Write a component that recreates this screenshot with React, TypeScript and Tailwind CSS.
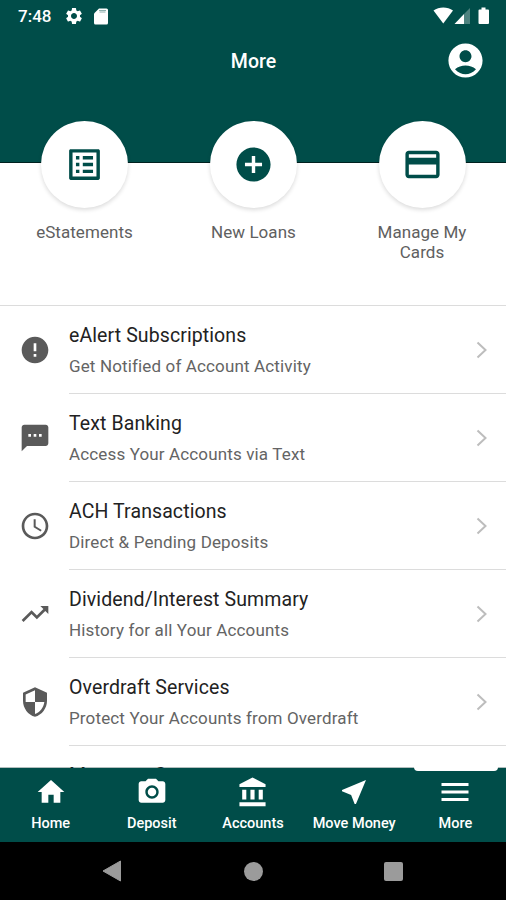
import React, { useState } from 'react'
import {
    MdAccessTime,
    MdAccountCircle,
    MdAddCircle,
    MdError,
    MdHome,
    MdListAlt,
    MdMenu,
    MdNearMe,
    MdPayment,
    MdPhotoCamera,
    MdSecurity,
    MdSettings,
    MdTextsms,
    MdTrendingUp,
} from 'react-icons/md'

const shortcuts = [
    { label: 'eStatements', icon: MdListAlt },
    { label: 'New Loans', icon: MdAddCircle },
    { label: 'Manage My Cards', icon: MdPayment },
]

const services = [
    { title: 'eAlert Subscriptions', text: 'Get Notified of Account Activity', icon: MdError },
    { title: 'Text Banking', text: 'Access Your Accounts via Text', icon: MdTextsms },
    { title: 'ACH Transactions', text: 'Direct & Pending Deposits', icon: MdAccessTime },
    { title: 'Dividend/Interest Summary', text: 'History for all Your Accounts', icon: MdTrendingUp },
    { title: 'Overdraft Services', text: 'Protect Your Accounts from Overdraft', icon: MdSecurity },
]

const tabs = [
    { label: 'Home', icon: MdHome, size: 'h-8 w-8' },
    { label: 'Deposit', icon: MdPhotoCamera, size: 'h-8 w-8' },
    { label: 'Accounts', icon: BankIcon, size: 'h-[33px] w-[33px]' },
    { label: 'Move Money', icon: MdNearMe, size: 'h-8 w-8' },
    { label: 'More', icon: MdMenu, size: 'h-9 w-9' },
]

function BankIcon({ className }: { className?: string }) {
    return (
        <svg viewBox="-0.5 0 24 24" className={className} fill="currentColor">
            <path d="M4 10v7h3v-7H4zm6 0v7h3v-7h-3zM2 22h19v-3H2v3zm14-12v7h3v-7h-3zm-4.5-9L2 6v2h19V6l-9.5-5z" />
        </svg>
    )
}

function StatusBar() {
    return (
        <div className="flex h-8 items-center justify-between pr-[15px] pl-[18px]">
            <div className="flex items-center">
                <span className="w-[46px] text-[17px] leading-8 font-medium">7:48</span>
                <MdSettings className="h-5 w-5" />
                <svg viewBox="0 0 14 17" className="ml-[10px] h-[17px] w-[14px]">
                    <path d="M5 .5h7.500q1.500 0 1.500 1.500v13q0 1.500-1.500 1.500h-11Q0 16.500 0 15V5.500Z" fill="#fff" />
                    <path d="M5 2.500h7M5.500 4h6" stroke="#8fb0ae" />
                </svg>
            </div>
            <svg viewBox="0 0 58 18" className="h-[18px] w-[58px]">
                <path d="M.5 3.400C6 -.6 14.500 -.6 20 3.400L10.250 16.500Z" fill="#fff" />
                <path d="M37 1V17H31V7Z" fill="#4d827f" />
                <path d="M31 7V17H21.500Z" fill="#fff" />
                <path d="M46 2.500h2.500V.5h4v2h2.500q1 0 1 1V16q0 1-1 1H46.500q-1 0-1-1V3.500q0-1 1-1Z" fill="#fff" />
            </svg>
        </div>
    )
}

export default function App() {
    const [activeTab, setActiveTab] = useState('More')

    return (
        <div className="flex h-[900px] w-[506px] flex-col overflow-hidden bg-white font-[Roboto,sans-serif]">
            <header className="h-[163px] shrink-0 border-b border-[#00211f] bg-[#004d49] text-white">
                <StatusBar />
                <div className="grid h-[59px] grid-cols-[1fr_auto_1fr] items-center pr-5 pl-[21px]">
                    <span />
                    <h1 className="text-[19.5px] font-medium">More</h1>
                    <button className="-mt-[2px] justify-self-end" aria-label="Profile">
                        <MdAccountCircle className="h-[41px] w-[41px]" />
                    </button>
                </div>
            </header>

            {/* Shortcuts */}
            <section className="-mt-[42px] grid h-[185px] shrink-0 grid-cols-[169px_169px_1fr] border-b border-[#dcdcdc]">
                {shortcuts.map(({ label, icon: Icon }) => (
                    <button key={label} className="relative flex flex-col items-center">
                        <span className="flex h-[87px] w-[87px] shrink-0 items-center justify-center rounded-full bg-white text-[#004d49] shadow-[0_2px_4px_rgba(0,0,0,0.14)]">
                            <Icon className="h-[41px] w-[41px]" />
                        </span>
                        <span className="mt-[14px] w-[110px] text-[17px] leading-5 tracking-[0.05px] text-[#606060]">{label}</span>
                    </button>
                ))}
            </section>

            {/* Services */}
            <main className="min-h-0 flex-1 overflow-hidden">
                {services.map(({ title, text, icon: Icon }) => (
                    <div key={title} className="flex h-[88px]">
                        <div className="flex w-[69px] items-center justify-center">
                            <Icon className="h-8 w-8 text-[#5a5a5a]" />
                        </div>
                        <div className="flex flex-1 items-center justify-between border-b border-[#dcdcdc] pr-[19px]">
                            <div className="pt-px">
                                <h2 className="text-[19.5px] leading-[32px] tracking-[0.1px] text-[#222]">{title}</h2>
                                <p className="text-[17px] leading-[28px] tracking-[0.14px] text-[#646464]">{text}</p>
                            </div>
                            <svg viewBox="0 0 11 18" className="mt-px h-[18px] w-[11px]" fill="none" stroke="#bdbdbd" strokeWidth="2">
                                <path d="M1.500 1.500L9.500 9L1.500 16.500" />
                            </svg>
                        </div>
                    </div>
                ))}
                <h2 className="ml-[69px] pt-[11px] text-[19.5px] leading-[38px] tracking-[0.1px] text-[#222]">Message Center</h2>
            </main>

            {/* Tabs */}
            <nav className="relative grid h-[74px] shrink-0 grid-cols-5 bg-[#004d49] text-white shadow-[0_-1px_0_rgba(0,40,38,0.3)]">
                {tabs.map(({ label, icon: Icon, size }) => (
                    <button key={label} onClick={() => setActiveTab(label)} className="flex flex-col items-center">
                        <span className={`-mt-px ml-px h-1 w-[84px] shrink-0 rounded-b-sm ${activeTab === label ? 'bg-white' : ''}`} />
                        <span className="mt-[5px] flex h-8 shrink-0 items-center">
                            <Icon className={size} />
                        </span>
                        <span className="mt-[6px] text-[14.5px] leading-5 font-medium whitespace-nowrap">{label}</span>
                    </button>
                ))}
            </nav>

            <div className="flex h-[58px] shrink-0 items-center justify-between bg-black pr-[103px] pl-[102px]">
                <svg viewBox="0 0 20 22" className="h-[22px] w-5">
                    <path d="M1 11L18.500 1V21Z" fill="#9b9b9b" stroke="#9b9b9b" strokeLinejoin="round" />
                </svg>
                <span className="h-[19px] w-[19px] rounded-full bg-[#9b9b9b]" />
                <span className="h-[19px] w-[19px] rounded-[2px] bg-[#9b9b9b]" />
            </div>
        </div>
    )
}
